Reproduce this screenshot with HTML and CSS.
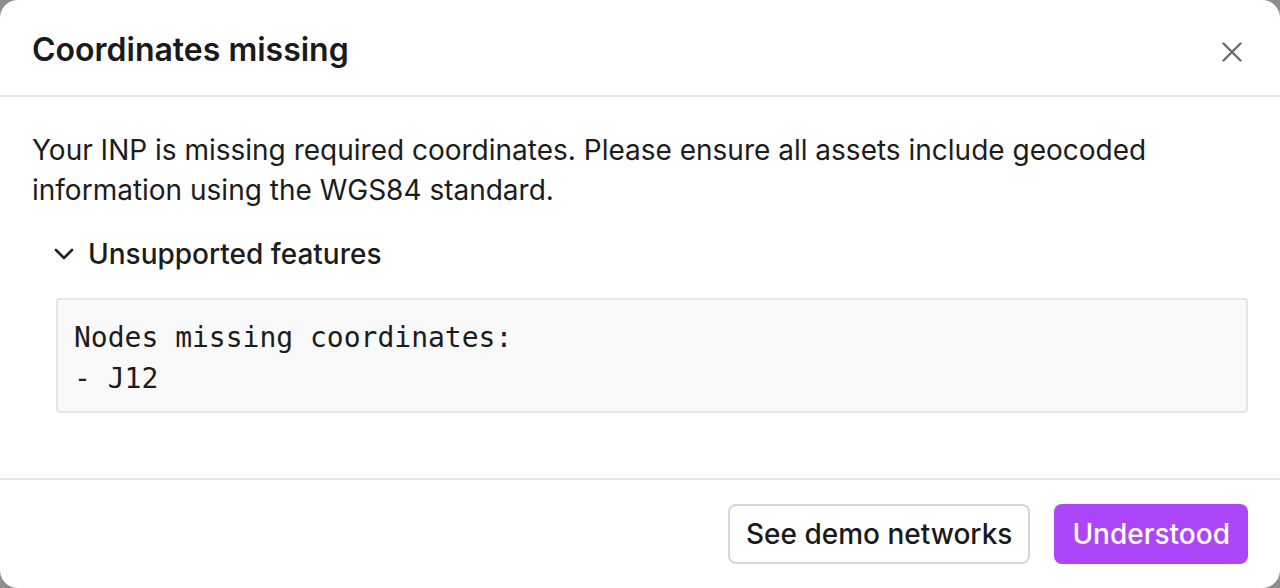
FILE: index.html
```html
<!DOCTYPE html>
<html lang="en">
<head>
<meta charset="utf-8">
<title>Coordinates missing</title>
<link rel="stylesheet" href="styles.css">
</head>
<body>
<div class="dialog" role="dialog" aria-labelledby="dlg-title">
  <header class="dialog-header">
    <h2 id="dlg-title" class="dialog-title">Coordinates missing</h2>
    <button class="close-btn" aria-label="Close">
      <svg width="20" height="20" viewBox="0 0 20 20" fill="none" stroke="currentColor" stroke-width="2.4" stroke-linecap="round">
        <path d="M1.5 1.5 18.5 18.5M18.5 1.5 1.5 18.5"/>
      </svg>
    </button>
  </header>
  <section class="dialog-body">
    <p class="message">Your INP is missing required coordinates. Please ensure all assets include geocoded information using the WGS84 standard.</p>
    <div class="details">
      <div class="details-toggle">
        <svg class="chevron" width="20" height="12" viewBox="0 0 20 12" fill="none" stroke="currentColor" stroke-width="2.6" stroke-linecap="round" stroke-linejoin="round">
          <path d="M2 2 10 10 18 2"/>
        </svg>
        <span>Unsupported features</span>
      </div>
      <pre class="details-code">Nodes missing coordinates:
- J12</pre>
    </div>
  </section>
  <footer class="dialog-footer">
    <button class="btn btn-outline">See demo networks</button>
    <button class="btn btn-primary">Understood</button>
  </footer>
</div>
</body>
</html>
```
FILE: styles.css
```css
html, body {
  margin: 0;
  padding: 0;
  height: 100%;
}

body {
  background: #8e8e8e;
  font-family: Inter, "Noto Sans", sans-serif;
  color: #1c1c1c;
}

.dialog {
  height: 588px;
  background: #ffffff;
  border-radius: 18px;
  display: flex;
  flex-direction: column;
  overflow: hidden;
}

.dialog-header {
  height: 97px;
  box-sizing: border-box;
  padding: 0 32px;
  display: flex;
  align-items: center;
  justify-content: space-between;
  border-bottom: 2px solid #e6e6e6;
}

.dialog-title {
  margin: 4px 0 0;
  font-size: 32px;
  font-weight: 600;
  color: #1a1a1a;
}

.close-btn {
  background: none;
  border: 0;
  padding: 0;
  margin: 8px 6px 0 0;
  color: #6b6b6b;
  display: flex;
  cursor: pointer;
}

.dialog-body {
  flex: 1;
  padding: 33px 32px 0;
}

.message {
  margin: 0;
  font-size: 28px;
  line-height: 40px;
  color: #1c1c1c;
}

.details {
  margin-top: 24px;
}

.details-toggle {
  display: flex;
  align-items: center;
  gap: 14px;
  padding-left: 22px;
  height: 40px;
  font-size: 28px;
  font-weight: 500;
  color: #1c1c1c;
}

.chevron {
  color: #222222;
}

.details-code {
  margin: 24px 0 0 24px;
  padding: 17px 16px 12px;
  background: #f9f9f9;
  border: 2px solid #e6e6e6;
  border-radius: 4px;
  font-family: "DejaVu Sans Mono", "Liberation Mono", monospace;
  font-size: 28px;
  line-height: 41px;
  color: #1c1c1c;
}

.dialog-footer {
  border-top: 2px solid #e6e6e6;
  padding: 24px 32px 24px;
  display: flex;
  justify-content: flex-end;
  gap: 24px;
}

.btn {
  height: 60px;
  box-sizing: border-box;
  border-radius: 8px;
  font-family: Inter, "Noto Sans", sans-serif;
  font-size: 28px;
  font-weight: 500;
  cursor: pointer;
}

.btn-outline {
  background: #ffffff;
  border: 2px solid #d6d6d6;
  color: #1a1a1a;
  padding: 0 16px;
}

.btn-primary {
  background: #ad45f8;
  border: 0;
  color: #ffffff;
  padding: 0 18px;
}
```
